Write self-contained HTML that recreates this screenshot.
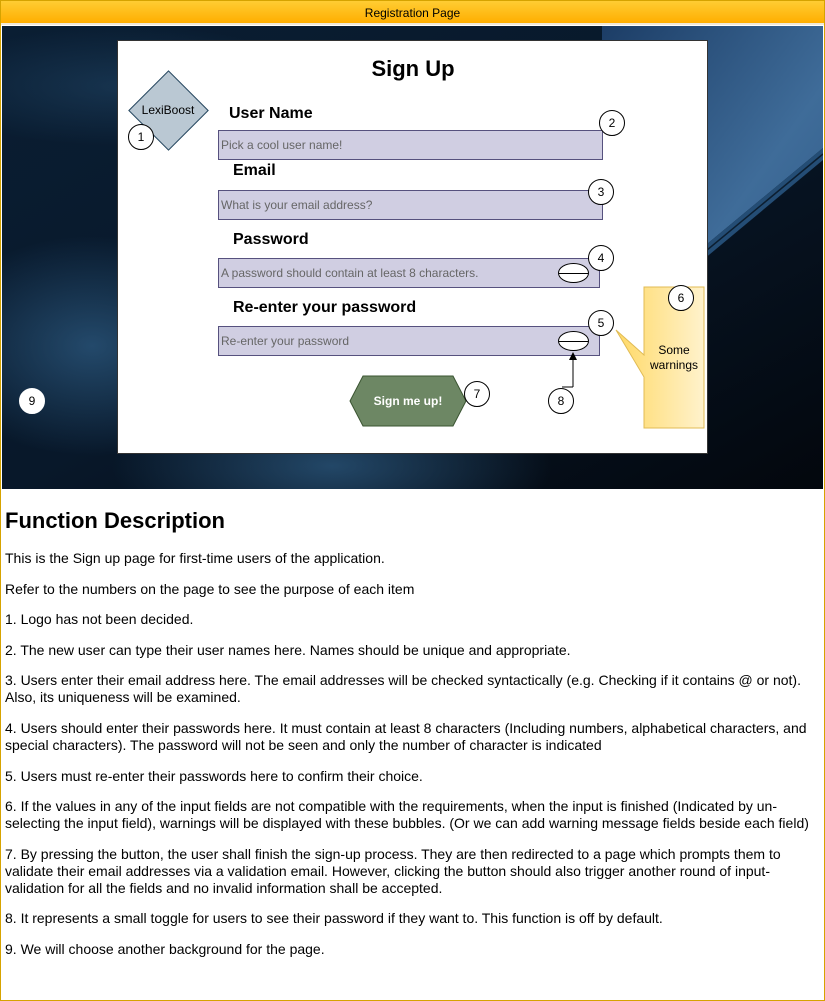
<!DOCTYPE html>
<html><head><meta charset="utf-8"><style>
*{margin:0;padding:0;box-sizing:border-box}
body{width:825px;height:1001px;background:#fff;font-family:"Liberation Sans",Arial,sans-serif;position:relative;overflow:hidden}
.frame{position:absolute;left:0;top:0;width:825px;height:1001px;border:1px solid #d6a300}
.hdr{position:absolute;left:1px;top:1px;width:823px;height:24px;background:linear-gradient(#ffcd33,#ffae00);border-bottom:2px solid #f0e9d8;font-size:12px;text-align:center;line-height:24px;color:#000}
.bg{position:absolute;left:2px;top:26px;width:821px;height:463px}
.card{position:absolute;left:117px;top:40px;width:591px;height:414px;background:#fff;border:1px solid #333}
.a{position:absolute}
.circ{position:absolute;width:26px;height:26px;border:1px solid #000;border-radius:50%;background:#fff;font-size:12px;text-align:center;line-height:24px}
.lbl{position:absolute;font-size:16px;font-weight:bold}
.inp{position:absolute;background:#d0cee2;border:1px solid #56517e;font-size:12px;color:#666;line-height:28px;padding-left:2px}
.eye{position:absolute;width:31px;height:20px;border:1px solid #000;border-radius:50%;background:#fff}
.eye:after{content:"";position:absolute;left:0;right:0;top:9px;height:1px;background:#000}
.txt{position:absolute;left:5px;top:508px;width:815px;font-size:14px;line-height:17px;color:#000}
.txt h1{font-size:22px;font-weight:bold;line-height:26px;margin-bottom:16px}
.txt p{margin-bottom:13.6px}
</style></head><body>
<div class="frame"></div>
<div class="hdr">Registration Page</div>
<svg class="bg" width="821" height="463" viewBox="0 0 821 463">
<defs>
<linearGradient id="base" x1="0" y1="0" x2="1" y2="1"><stop offset="0" stop-color="#0a1e33"/><stop offset="0.5" stop-color="#08182a"/><stop offset="1" stop-color="#03070d"/></linearGradient>
<radialGradient id="c1" cx="0.5" cy="0.5" r="0.5"><stop offset="0" stop-color="#2f5e86" stop-opacity=".7"/><stop offset="1" stop-color="#2f5e86" stop-opacity="0"/></radialGradient>
<linearGradient id="pl" x1="0" y1="0" x2="1" y2="1"><stop offset="0" stop-color="#1c3d66"/><stop offset="0.6" stop-color="#3f6c99"/><stop offset="1" stop-color="#2e5a86"/></linearGradient>
</defs>
<rect width="821" height="463" fill="url(#base)"/>
<ellipse cx="90" cy="320" rx="160" ry="110" fill="url(#c1)"/>
<ellipse cx="330" cy="440" rx="220" ry="80" fill="url(#c1)"/>
<ellipse cx="120" cy="60" rx="200" ry="60" fill="url(#c1)" opacity=".5"/>
<polygon points="600,0 821,0 821,122 600,305" fill="url(#pl)"/>
<polygon points="600,305 821,122 821,134 600,318" fill="#244d75"/>
<line x1="600" y1="311" x2="821" y2="128" stroke="#0c1e30" stroke-width="1.5"/>
</svg>
<div class="card"></div>
<div class="a" style="left:140px;top:82px;width:57px;height:57px;background:#bac8d3;border:1px solid #23445d;transform:rotate(45deg)"></div>
<div class="a" style="left:128px;top:103px;width:80px;text-align:center;font-size:12px">LexiBoost</div>
<div class="circ" style="left:128px;top:124px">1</div>
<div class="a" style="left:118px;top:56px;width:590px;text-align:center;font-size:22px;font-weight:bold">Sign Up</div>
<div class="lbl" style="left:229px;top:105px">User Name</div>
<div class="inp" style="left:218px;top:130px;width:385px;height:30px">Pick a cool user name!</div>
<div class="circ" style="left:599px;top:110px">2</div>
<div class="lbl" style="left:233px;top:162px">Email</div>
<div class="inp" style="left:218px;top:190px;width:385px;height:30px">What is your email address?</div>
<div class="circ" style="left:588px;top:179px">3</div>
<div class="lbl" style="left:233px;top:231px">Password</div>
<div class="inp" style="left:218px;top:258px;width:382px;height:30px">A password should contain at least 8 characters.</div>
<div class="eye" style="left:558px;top:263px"></div>
<div class="circ" style="left:588px;top:245px">4</div>
<div class="lbl" style="left:233px;top:299px">Re-enter your password</div>
<div class="inp" style="left:218px;top:326px;width:382px;height:30px">Re-enter your password</div>
<div class="eye" style="left:558px;top:331px"></div>
<div class="circ" style="left:588px;top:310px">5</div>
<svg class="a" style="left:540px;top:280px" width="170" height="160">
<defs><linearGradient id="g" x1="0" x2="1"><stop offset="0" stop-color="#ffd966"/><stop offset="1" stop-color="#fff2cc"/></linearGradient></defs>
<polygon points="104,7 164,7 164,148 104,148 104,97 76,50 104,75" fill="url(#g)" stroke="#e0bb55"/>
<line x1="33" y1="107" x2="33" y2="78" stroke="#000"/>
<polygon points="29,80 37,80 33,72" fill="#000"/>
<line x1="22" y1="107" x2="33" y2="107" stroke="#000"/>
</svg>
<div class="circ" style="left:668px;top:285px">6</div>
<div class="a" style="left:644px;top:343px;width:60px;text-align:center;font-size:12px;line-height:15px">Some warnings</div>
<div class="circ" style="left:548px;top:388px">8</div>
<svg class="a" style="left:349px;top:375px" width="118" height="52"><polygon points="1,26 14,1 104,1 117,26 104,51 14,51" fill="#6d8764" stroke="#3a5431"/></svg>
<div class="a" style="left:349px;top:394px;width:118px;text-align:center;font-size:12px;font-weight:bold;color:#fff">Sign me up!</div>
<div class="circ" style="left:464px;top:381px">7</div>
<div class="circ" style="left:19px;top:388px;border-color:#fff">9</div>
<div class="txt">
<h1>Function Description</h1>
<p>This is the Sign up page for first-time users of the application.</p>
<p>Refer to the numbers on the page to see the purpose of each item</p>
<p>1. Logo has not been decided.</p>
<p>2. The new user can type their user names here. Names should be unique and appropriate.</p>
<p>3. Users enter their email address here. The email addresses will be checked syntactically (e.g. Checking if it contains @ or not). Also, its uniqueness will be examined.</p>
<p>4. Users should enter their passwords here. It must contain at least 8 characters (Including numbers, alphabetical characters, and special characters). The password will not be seen and only the number of character is indicated</p>
<p>5. Users must re-enter their passwords here to confirm their choice.</p>
<p>6. If the values in any of the input fields are not compatible with the requirements, when the input is finished (Indicated by un-selecting the input field), warnings will be displayed with these bubbles. (Or we can add warning message fields beside each field)</p>
<p>7. By pressing the button, the user shall finish the sign-up process. They are then redirected to a page which prompts them to validate their email addresses via a validation email. However, clicking the button should also trigger another round of input-validation for all the fields and no invalid information shall be accepted.</p>
<p>8. It represents a small toggle for users to see their password if they want to. This function is off by default.</p>
<p>9. We will choose another background for the page.</p>
</div>
</body></html>
